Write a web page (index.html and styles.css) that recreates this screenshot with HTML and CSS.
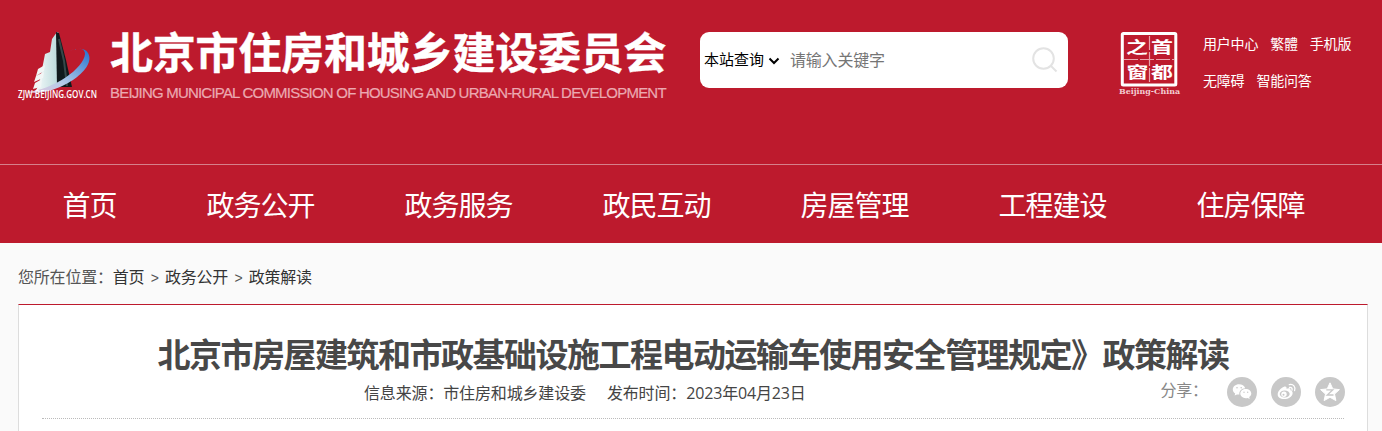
FILE: index.html
```html
<!DOCTYPE html>
<html lang="zh-CN">
<head>
<meta charset="UTF-8">
<meta name="viewport" content="width=device-width, initial-scale=1.0">
<title>政策解读_北京市住房和城乡建设委员会</title>
<link rel="stylesheet" href="styles.css">
</head>
<body>
<div class="header">
    <!-- logo -->
    <a class="logo" href="#">
        <svg class="logo-mark" width="80" height="72" viewBox="0 0 80 72">
            <defs>
                <linearGradient id="ring" x1="0" y1="1" x2="1" y2="0">
                    <stop offset="0" stop-color="#e8c6dc"/>
                    <stop offset=".4" stop-color="#b4cbe8"/>
                    <stop offset="1" stop-color="#1f6fd0"/>
                </linearGradient>
                <linearGradient id="tower" x1="0" y1="0" x2="1" y2="0">
                    <stop offset="0" stop-color="#f4fafa"/>
                    <stop offset="1" stop-color="#b8d8da"/>
                </linearGradient>
            </defs>
            <path d="M18 58l3-5 6-31 5-2 2-13 5-7 2 1-1 54-9 3z" fill="url(#tower)"/>
            <path d="M20 37l7-4-1 6-8 5zM18 44l8-4-1 6-9 4zM17 51l7-4-1 8-8 2z" fill="#f2f6f6"/>
            <path d="M38 0l3 1 7 27 6 27H39z" fill="#10191c"/>
            <path d="M41 7l5 22 3 25" fill="none" stroke="#35484a" stroke-width="2"/>
            <path d="M8 60C36 66 80 38 70 21c-3-6-14-5-21-1 11-5 18-4 18 2C66 36 36 58 8 60z" fill="url(#ring)"/>
            <text x="0" y="66" textLength="79" lengthAdjust="spacingAndGlyphs">ZJW.BEIJING.GOV.CN</text>
        </svg>
        <div class="logo-text">
            <div class="name-cn">北京市住房和城乡建设委员会</div>
            <div class="name-en">BEIJING MUNICIPAL COMMISSION OF HOUSING AND URBAN-RURAL DEVELOPMENT</div>
        </div>
    </a>

    <!-- 搜索 -->
    <form class="search">
        <span class="search-type">本站查询</span>
        <svg class="arrow" width="12" height="8" viewBox="0 0 12 8"><path d="M1.500 1.500L6 6l4.500-4.500" fill="none" stroke="#000" stroke-width="2"/></svg>
        <input type="text" placeholder="请输入关键字">
        <svg width="26" height="26" viewBox="0 0 26 26" fill="none" stroke="#e3e3e3" stroke-width="2"><circle cx="11.500" cy="11.500" r="10.300"/><path d="M19 19l5.500 5.500"/></svg>
    </form>

    <!-- 首都之窗 -->
    <svg class="capital" width="64" height="66" viewBox="0 0 64 66">
        <rect x="4.300" y="1.600" width="53.500" height="51.500" rx="1" fill="none" stroke="#fff" stroke-width="3"/>
        <path d="M31.500 4v47M6 27.500h50" stroke="#eba3ac" stroke-width="1.200" stroke-dasharray="14 2"/>
        <g class="seal" transform="scale(1.220 .86)">
            <text x="6.500" y="25">之</text>
            <text x="27" y="25">首</text>
            <text x="7" y="53.500">窗</text>
            <text x="27" y="53.500">都</text>
        </g>
        <text class="seal-en" x="1" y="62" textLength="61" lengthAdjust="spacingAndGlyphs">Beijing-China</text>
    </svg>

    <div class="top-links">
        <div><a href="#">用户中心</a><a href="#">繁體</a><a href="#">手机版</a></div>
        <div><a href="#">无障碍</a><a href="#">智能问答</a></div>
    </div>
</div>

<!-- 导航 -->
<div class="nav">
    <a href="#">首页</a>
    <a href="#">政务公开</a>
    <a href="#">政务服务</a>
    <a href="#">政民互动</a>
    <a href="#">房屋管理</a>
    <a href="#">工程建设</a>
    <a href="#">住房保障</a>
</div>

<div class="crumbs">您所在位置：<a href="#">首页</a><span>&gt;</span><a href="#">政务公开</a><span>&gt;</span><a href="#">政策解读</a></div>

<!-- 正文 -->
<div class="article">
    <h1>北京市房屋建筑和市政基础设施工程电动运输车使用安全管理规定》政策解读</h1>
    <div class="info">
        <div class="source">
            <span>信息来源：市住房和城乡建设委</span>
            <span>发布时间：2023年04月23日</span>
        </div>
        <div class="share">
            <span>分享：</span>
            <svg width="30" height="30" viewBox="0 0 30 30">
                <circle cx="15" cy="15" r="15" fill="#c8c8c8"/>
                <path d="M12 7.200c-3.500 0-6.200 2.300-6.200 5.200 0 1.700.9 3.200 2.400 4.200l-.6 2 2.400-1.200c.8.200 1.500.2 2.400.2-.6-3.400 2-6.400 5.800-6.400-.7-2.400-3.200-4-6.200-4z" fill="#fff"/>
                <path d="M18.800 12c-3.100 0-5.500 2-5.500 4.600s2.400 4.600 5.500 4.600c.7 0 1.300-.1 1.900-.3l2 1.100-.5-1.900c1.300-.9 2.100-2.100 2.100-3.500 0-2.600-2.400-4.600-5.500-4.600z" fill="#fff"/>
                <g fill="#c8c8c8"><circle cx="10" cy="10.800" r=".8"/><circle cx="14.200" cy="10.800" r=".8"/><circle cx="17" cy="15.200" r=".7"/><circle cx="20.700" cy="15.200" r=".7"/></g>
            </svg>
            <svg width="30" height="30" viewBox="0 0 30 30">
                <circle cx="15" cy="15" r="15" fill="#c8c8c8"/>
                <path d="M13 9.800c1.700-.7 2.900 0 2.500 2 2.400-1 4.500-.6 4 1.500 1.600.5 2.300 1.500 2.100 3.200-.4 3.300-4.300 5.600-8.400 5.600-4 0-6.700-2-6.500-4.900C6.900 13.900 10 10.900 13 9.800z" fill="#fff"/>
                <ellipse cx="13.700" cy="17" rx="5" ry="3.500" fill="#c8c8c8"/>
                <circle cx="13" cy="17.300" r="2.700" fill="#fff"/>
                <circle cx="12.500" cy="17.800" r="1" fill="#c8c8c8"/>
                <path d="M18.300 7.600c4-1 6.600 2.400 5.300 6M18.500 10.500c1.800-.5 3.100.9 2.500 2.700" fill="none" stroke="#fff" stroke-width="1.300" stroke-linecap="round"/>
            </svg>
            <svg width="30" height="30" viewBox="0 0 30 30">
                <circle cx="15" cy="15" r="15" fill="#c8c8c8"/>
                <path d="M15 5.800l2.800 6.100 6.600.7-4.900 4.500 1.400 6.500-5.900-3.300-5.900 3.300 1.400-6.500-4.900-4.500 6.600-.7z" fill="#fff" stroke="#fff" stroke-linejoin="round"/>
                <path d="M11.300 12.800h6.500l-5.600 5.200h6.300" fill="none" stroke="#c8c8c8" stroke-width="1.300"/>
            </svg>
        </div>
    </div>
</div>
</body>
</html>
```
FILE: styles.css
```css
* {
    box-sizing: border-box;
}
body {
    margin: 0;
    background: #fafafa;
    color: #333;
    font-family: "Liberation Sans", "Noto Sans CJK SC", sans-serif;
    font-size: 16px;
}
a {
    color: inherit;
    text-decoration: none;
}
svg {
    display: block;
    flex: none;
}

/* 页头 */
.header {
    display: flex;
    align-items: flex-start;
    height: 164px;
    padding: 32px 0 0 18px;
    background: #bd1a2d;
    color: #fff;
}
.logo {
    display: flex;
    width: 682px;
}
.logo-mark {
    overflow: visible;
}
.logo-mark text {
    font: 600 10.5px "Open Sans", sans-serif;
    fill: #fff;
}
.logo-text {
    margin-left: 12px;
    white-space: nowrap;
}
.name-cn {
    height: 51px;
    line-height: 44px;
    font-size: 43px;
    font-weight: bold;
    letter-spacing: -.2px;
    -webkit-text-stroke: .4px #fff;
}
.name-en {
    line-height: 20px;
    font-size: 15px;
    letter-spacing: -.79px;
    color: #eba9b1;
    -webkit-text-stroke: .2px #eba9b1;
}

/* 搜索框 */
.search {
    display: flex;
    align-items: center;
    width: 368px;
    height: 56px;
    padding: 0 10px 0 4px;
    border-radius: 9px;
    background: #fff;
}
.search-type {
    width: 60px;
    margin-top: -3px;
    color: #000;
    font-size: 15px;
    white-space: nowrap;
}
.arrow {
    margin: 2px 10px 0 4px;
}
.search input {
    flex: 1;
    min-width: 0;
    padding: 2px 0 0;
    border: 0;
    outline: none;
    font: inherit;
    letter-spacing: -.2px;
}
.search input::placeholder {
    color: #757575;
}
.capital {
    margin-left: 50px;
}
.seal {
    font: bold 18px "Noto Sans CJK SC", sans-serif;
    fill: #fff;
}
.seal-en {
    font: bold 8px "DejaVu Serif", serif;
    fill: #f3cdd2;
}
.top-links {
    margin: -6px 0 0 21px;
    line-height: 37px;
    font-size: 14px;
    letter-spacing: -.2px;
}
.top-links a {
    margin-right: 12px;
}

/* 导航 */
.nav {
    display: flex;
    gap: 90px;
    height: 79px;
    padding-left: 62.5px;
    border-top: 1px solid #d6808b;
    background: #bd1a2d;
    color: #fff;
    line-height: 84px;
    font-size: 28px;
    letter-spacing: -1px;
}

.crumbs {
    height: 61px;
    padding-left: 18px;
    line-height: 70px;
    color: #555;
    letter-spacing: -.2px;
}
.crumbs a {
    color: #333;
}
.crumbs span {
    display: inline-block;
    width: 20.5px;
    text-align: center;
    font-size: 14px;
}

/* 文章 */
.article {
    height: 127px;
    margin: 0 14px 0 18px;
    padding: 30px 23px 0;
    border: 1px solid #ddd;
    border-top-color: #bd1a2d;
    border-bottom: 0;
    background: #fff;
}
.article h1 {
    height: 42px;
    margin: 0;
    line-height: 42px;
    text-align: center;
    font-size: 33px;
    letter-spacing: -1.5px;
    color: #484848;
    white-space: nowrap;
}
.info {
    display: flex;
    justify-content: space-between;
    height: 42px;
    border-bottom: 1px dotted #bbb;
}
.source {
    display: flex;
    gap: 21px;
    margin-left: 322px;
    line-height: 34px;
    font-family: "Open Sans", "Noto Sans CJK SC", sans-serif;
    color: #444;
    letter-spacing: -.15px;
}
.source span {
    margin-top: -1px;
}
.share {
    display: flex;
    gap: 14px;
    margin-right: -.5px;
    color: #888;
}
.share span {
    width: 52px;
    line-height: 28px;
    letter-spacing: -.2px;
}
```
